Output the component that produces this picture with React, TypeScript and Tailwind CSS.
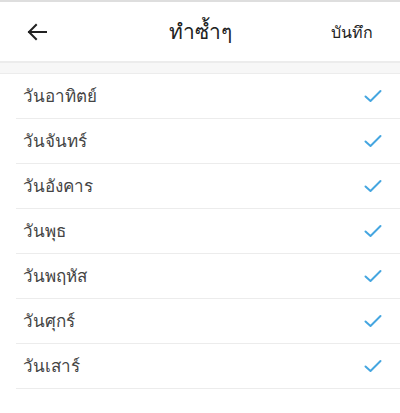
import React from "react";

const days = ["วันอาทิตย์", "วันจันทร์", "วันอังคาร", "วันพุธ", "วันพฤหัส", "วันศุกร์", "วันเสาร์"];

function Check() {
  return (
    <svg width="18" height="14" viewBox="0 0 18 14" fill="none">
      <path d="M1.5 7.5 L6.5 12 L16.5 2" stroke="#45a6e0" strokeWidth="2" strokeLinecap="round" strokeLinejoin="round" />
    </svg>
  );
}

export default function App() {
  return (
    <div className="w-[400px] h-[413px] bg-white font-['Noto_Sans',sans-serif]">
      <div className="h-[2px] bg-[#dedede]" />
      <div className="h-[59px] flex items-center">
        <div className="w-[100px] pl-[27px] flex items-center">
          <svg width="20" height="18" viewBox="0 0 20 18" fill="none">
            <path d="M19 9 H2 M9 2 L2 9 L9 16" stroke="#222" strokeWidth="2" strokeLinecap="square" strokeLinejoin="miter" />
          </svg>
        </div>
        <div className="flex-1 text-center text-[21px] text-[#222]">ทำซ้ำๆ</div>
        <div className="w-[100px] pr-[27px] text-right text-[16px] text-[#222]">บันทึก</div>
      </div>
      <div className="h-[2px] bg-[#ececec]" />
      <div className="h-[11px] bg-[#f7f7f7] border-b border-[#ececec]" />
      <div className="flex flex-col">
        {days.map((d) => (
          <div key={d} className="ml-[16px] h-[45px] border-b border-[#ececec] flex items-center justify-between pr-[18px]">
            <span className="pl-[7px] text-[17px] text-[#444]">{d}</span>
            <Check />
          </div>
        ))}
      </div>
    </div>
  );
}
